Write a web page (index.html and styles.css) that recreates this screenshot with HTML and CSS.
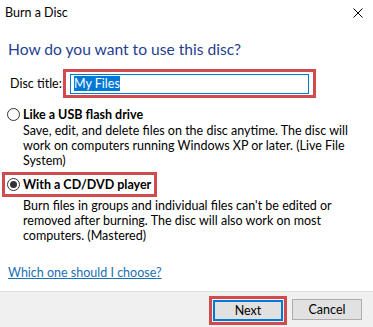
FILE: index.html
```html
<!DOCTYPE html>
<html lang="en">
<head>
    <meta charset="UTF-8">
    <title>Burn a Disc</title>
    <link rel="stylesheet" href="styles.css">
</head>
<body>
    <div class="dialog">
        <div class="titlebar">
            <span class="title">Burn a Disc</span>
            <svg class="close" width="10" height="10" viewBox="0 0 10 10">
                <path d="M0.5 0.5 L9.5 9.5 M9.5 0.5 L0.5 9.5" stroke="#000" stroke-width="1" fill="none"/>
            </svg>
        </div>

        <div class="content">
            <h1 class="instruction">How do you want to use this disc?</h1>

            <div class="title-row">
                <label class="field-label" for="disc-title">Disc title:</label>
                <div class="mark mark-input">
                    <div class="text-input" id="disc-title"><span class="selected">My Files</span></div>
                </div>
            </div>

            <div class="option">
                <div class="option-head">
                    <span class="radio"></span>
                    <span class="option-label">Like a USB flash drive</span>
                </div>
                <p class="option-desc">Save, edit, and delete files on the disc anytime. The disc will<br>work on computers running Windows XP or later. (Live File<br>System)</p>
            </div>

            <div class="option">
                <div class="option-head mark mark-radio">
                    <span class="radio checked"></span>
                    <span class="option-label">With a CD/DVD player</span>
                </div>
                <p class="option-desc">Burn files in groups and individual files can't be edited or<br>removed after burning. The disc will also work on most<br>computers. (Mastered)</p>
            </div>

            <a class="help-link" href="#">Which one should I choose?</a>
        </div>

        <div class="footer">
            <div class="mark mark-button">
                <button class="btn btn-default">Next</button>
            </div>
            <button class="btn">Cancel</button>
        </div>
    </div>
</body>
</html>
```

FILE: styles.css
```css
:root {
    --instruction-blue: #1f3f8f;
    --focus-blue: #0078d7;
    --mark-red: #cf4b4c;
    --footer-gray: #f0f0f0;
}

* {
    margin: 0;
    padding: 0;
    box-sizing: border-box;
}

body {
    font-family: Lato, 'Noto Sans', Arial, sans-serif;
    font-size: 12.5px;
    color: #000;
    background-color: white;
    width: 373px;
    height: 327px;
    overflow: hidden;
}

.dialog {
    display: flex;
    flex-direction: column;
    height: 327px;
}

.titlebar {
    display: flex;
    justify-content: space-between;
    align-items: center;
    height: 26px;
    padding: 0 10px 0 5px;
}

.title {
    line-height: 16px;
}

.content {
    flex: 1;
    padding: 12px 8px 0 8px;
}

.instruction {
    font-size: 15.6px;
    font-weight: 400;
    color: var(--instruction-blue);
    line-height: 22px;
}

.mark {
    border: 3px solid var(--mark-red);
}

.title-row {
    display: flex;
    align-items: center;
    margin-top: 9px;
}

.field-label {
    width: 55px;
    padding-left: 2px;
}

.mark-input {
    width: 253px;
    height: 29px;
    padding: 2px 4px 1px 4px;
}

.text-input {
    height: 20px;
    border: 1px solid var(--focus-blue);
    padding: 1px 3px;
    line-height: 16px;
}

.selected {
    background-color: var(--focus-blue);
    color: white;
}

.option {
    margin-left: -1px;
}

.option-head {
    display: flex;
    align-items: center;
    height: 16px;
    margin-top: 8px;
    gap: 3px;
    white-space: nowrap;
}

.option-label {
    font-weight: 700;
}

.radio {
    flex-shrink: 0;
    width: 13px;
    height: 13px;
    border: 1px solid #333;
    border-radius: 50%;
    background: white;
    display: flex;
    align-items: center;
    justify-content: center;
}

.radio.checked::after {
    content: '';
    width: 7px;
    height: 7px;
    border-radius: 50%;
    background: #333;
}

.option-desc {
    padding-left: 16px;
    line-height: 15px;
    margin-top: 1px;
}

.mark-radio {
    width: fit-content;
    height: 25px;
    margin-left: -5px;
    margin-top: 4px;
    padding: 0 3px 0 2px;
}

.help-link {
    display: inline-block;
    margin-top: 22px;
    color: #1a6fb5;
    text-decoration: underline;
    line-height: 16px;
}

.footer {
    display: flex;
    justify-content: flex-end;
    align-items: center;
    gap: 5px;
    height: 36px;
    padding: 0 11px 0 0;
    background-color: var(--footer-gray);
    border-top: 1px solid #dfdfdf;
}

.mark-button {
    padding: 1px;
    margin-top: 2px;
}

.btn {
    width: 70px;
    height: 21px;
    background-color: #e1e1e1;
    border: 1px solid #adadad;
    font-family: inherit;
    font-size: 12.5px;
    color: #000;
}

.btn-default {
    border: 2px solid var(--focus-blue);
}
```
